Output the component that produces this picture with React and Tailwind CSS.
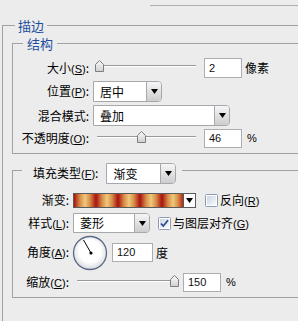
import React from 'react';

const Key = ({ k }) => (
  <span className="font-['Liberation_Sans',sans-serif] text-[11px]">
    (<span className="underline">{k}</span>)
  </span>
);

const Arrow = () => (
  <svg width="7" height="5" viewBox="0 0 7 5">
    <path d="M0 0h7L3.5 5z" fill="#000" />
  </svg>
);

const Select = ({ value, className }) => (
  <div className={`flex bg-white border border-[#a5a9ae] rounded-r-[4px] ${className}`}>
    <span className="flex-1 flex items-center pl-[6px] text-[12px]">{value}</span>
    <div className="w-[15px] flex items-center justify-center border-l border-[#a5a9ae] rounded-r-[3px] bg-gradient-to-b from-[#f6f6f6] to-[#cdcdcd]">
      <Arrow />
    </div>
  </div>
);

const Input = ({ value, className }) => (
  <div className={`flex items-center bg-white border border-[#abadb3] pl-[4px] font-['Liberation_Sans',sans-serif] text-[11px] text-[#111] ${className}`}>
    {value}
  </div>
);

const Thumb = () => (
  <svg width="9" height="12" viewBox="0 0 9 12">
    <defs>
      <linearGradient id="tg" x1="0" y1="0" x2="0" y2="1">
        <stop offset="0" stopColor="#fbfbfb" />
        <stop offset="1" stopColor="#cfcfcf" />
      </linearGradient>
    </defs>
    <path d="M0.5 4.5L4.5 0.5L8.5 4.5V11.5H0.5Z" fill="url(#tg)" stroke="#7d7d7d" />
  </svg>
);

const Slider = ({ className, thumb }) => (
  <div className={`relative h-[12px] ${className}`}>
    <div className="absolute left-0 right-0 top-[3px] h-[2px] border-t border-[#9a9a9a] border-b border-b-white" />
    <div className="absolute top-[-2px]" style={{ left: thumb }}>
      <Thumb />
    </div>
  </div>
);

const Check = ({ checked }) => (
  <svg width="13" height="13" viewBox="0 0 13 13">
    <defs>
      <linearGradient id={checked ? 'cg1' : 'cg2'} x1="0" y1="0" x2="1" y2="1">
        <stop offset="0" stopColor="#cbd6e6" />
        <stop offset="1" stopColor="#f7f9fc" />
      </linearGradient>
    </defs>
    <rect x="0.5" y="0.5" width="12" height="12" rx="1" fill="#fff" stroke="#8c9bb0" />
    <rect x="2" y="2" width="9" height="9" fill={`url(#${checked ? 'cg1' : 'cg2'})`} />
    {checked && <path d="M3 6.5L5.3 9L10 3.3" fill="none" stroke="#2d4a8f" strokeWidth="1.8" />}
  </svg>
);

const Dial = () => (
  <svg width="36" height="36" viewBox="0 0 36 36">
    <defs>
      <radialGradient id="dg" cx="0.5" cy="0.45" r="0.55">
        <stop offset="0.6" stopColor="#ffffff" />
        <stop offset="1" stopColor="#d6d9df" />
      </radialGradient>
    </defs>
    <circle cx="18" cy="18" r="16.5" fill="url(#dg)" stroke="#5d6a85" strokeWidth="1.3" />
    <line x1="19" y1="18" x2="11.5" y2="5" stroke="#000" strokeWidth="1" />
    <circle cx="19" cy="18" r="1.6" fill="#000" />
  </svg>
);

const Label = ({ className, children }) => (
  <div className={`text-right shrink-0 ${className}`}>{children}</div>
);

export default function App() {
  return (
    <div className="w-[298px] h-[321px] bg-[#ececec] overflow-hidden flex flex-col font-['Noto_Sans_CJK_SC','Liberation_Sans',sans-serif] text-[12px] leading-none text-black">
      <div className="h-[5px]" />
      <div className="ml-[150px] h-px bg-[#b0b0b0]" />

      {/* 描边 */}
      <div className="mt-[12px] ml-[2px] flex-1 flex flex-col">
        <div className="flex h-[14px]">
          <div className="self-end h-[7px] w-[13px] border-l border-t border-[#a0a0a0]" />
          <span className="px-[3px] text-[13px] text-[#1d4f9e] self-center">描边</span>
          <div className="self-start mt-[7px] flex-1 h-px bg-[#a0a0a0]" />
        </div>

        <div className="flex-1 border-l border-[#a0a0a0] pl-[9px] flex flex-col">
          {/* 结构 */}
          <div className="mt-[4px] flex h-[14px]">
            <div className="self-end h-[7px] w-[11px] border-l border-t border-[#a0a0a0]" />
            <span className="px-[4px] text-[13px] text-[#1d4f9e] self-center">结构</span>
            <div className="self-start mt-[7px] flex-1 h-px bg-[#a0a0a0]" />
          </div>
          <div className="border-l border-b border-[#a0a0a0] pt-[8px] pb-[5px] flex flex-col">
            <div className="flex items-center h-[20px]">
              <Label className="w-[76px]">大小<Key k="S" />:</Label>
              <Slider className="ml-[6px] w-[101px]" thumb={0} />
              <Input value="2" className="ml-[8px] w-[38px] h-[20px]" />
              <span className="ml-[3px]">像素</span>
            </div>
            <div className="mt-[3px] flex items-center h-[21px]">
              <Label className="w-[76px]">位置<Key k="P" />:</Label>
              <Select value="居中" className="ml-[4px] w-[69px] h-[21px]" />
            </div>
            <div className="mt-[3px] flex items-center h-[21px]">
              <Label className="w-[76px]">混合模式:</Label>
              <Select value="叠加" className="ml-[4px] w-[137px] h-[21px]" />
            </div>
            <div className="mt-[3px] flex items-center h-[19px]">
              <Label className="w-[76px]">不透明度<Key k="O" />:</Label>
              <Slider className="ml-[8px] w-[99px]" thumb={40} />
              <Input value="46" className="ml-[8px] w-[38px] h-[19px]" />
              <span className="ml-[5px] font-['Liberation_Sans',sans-serif] text-[11px]">%</span>
            </div>
          </div>

          {/* 填充类型 */}
          <div className="mt-[9px] flex h-[21px]">
            <div className="self-start mt-[7px] h-[14px] w-[10px] border-l border-t border-[#a0a0a0]" />
            <span className="ml-[11px] self-center">填充类型<Key k="F" />:</span>
            <Select value="渐变" className="ml-[8px] w-[70px] h-[21px]" />
            <div className="ml-[6px] self-start mt-[7px] flex-1 h-px bg-[#a0a0a0]" />
          </div>
          <div className="border-l border-b border-[#a0a0a0] pt-[7px] pb-[5px] flex flex-col">
            <div className="flex items-center h-[18px]">
              <Label className="w-[56px]">渐变:</Label>
              <div className="ml-[4px] flex h-[15px] border border-[#5a5a5a] bg-white">
                <div className="w-[109px] bg-[repeating-linear-gradient(90deg,#a8140f_0px,#d98c48_6px,#edca7c_11px,#d98c48_16px,#a8140f_22px)]" />
                <div className="w-[12px] flex items-center justify-center border-l border-[#5a5a5a]">
                  <Arrow />
                </div>
              </div>
              <div className="ml-[9px] flex"><Check /></div>
              <span className="ml-[2px]">反向<Key k="R" /></span>
            </div>
            <div className="mt-[4px] flex items-center h-[20px]">
              <Label className="w-[56px]">样式<Key k="L" />:</Label>
              <Select value="菱形" className="ml-[4px] w-[77px] h-[20px]" />
              <div className="ml-[8px] flex"><Check checked /></div>
              <span className="ml-[2px]">与图层对齐<Key k="G" /></span>
            </div>
            <div className="mt-[2px] flex items-center h-[35px]">
              <Label className="w-[56px]">角度<Key k="A" />:</Label>
              <div className="ml-[3px] flex"><Dial /></div>
              <Input value="120" className="ml-[4px] w-[41px] h-[19px]" />
              <span className="ml-[3px]">度</span>
            </div>
            <div className="mt-[3px] flex items-center h-[19px]">
              <Label className="w-[56px]">缩放<Key k="C" />:</Label>
              <Slider className="ml-[8px] w-[102px]" thumb={93} />
              <Input value="150" className="ml-[4px] w-[38px] h-[19px]" />
              <span className="ml-[5px] font-['Liberation_Sans',sans-serif] text-[11px]">%</span>
            </div>
          </div>
        </div>
      </div>
    </div>
  );
}
